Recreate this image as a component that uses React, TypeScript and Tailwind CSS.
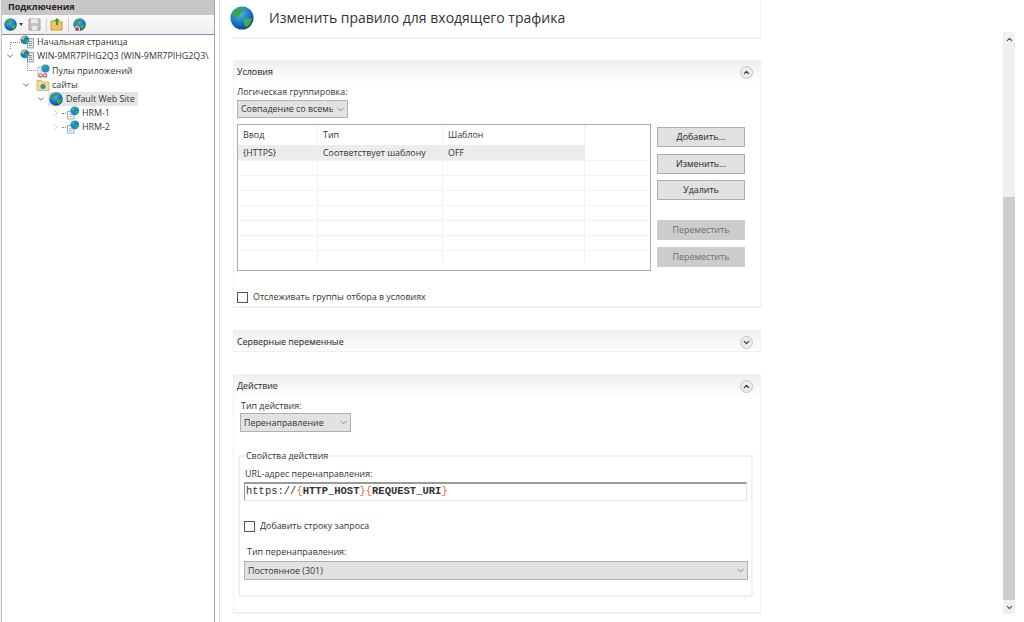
import React from 'react';
import { ChevronDown, ChevronRight, ChevronUp } from 'lucide-react';

const Land = ({ a = '#35a83a', b = '#3db045' }: { a?: string; b?: string }) => (
  <>
    <path d="M6 4c3-2 6-2 8-1 1 2-1 3-3 4-1 2-3 3-2 5-2 0-5-1-6-3 0-2 1-4 3-5z" fill={a} />
    <path d="M14 13c3-1 6-1 8 0-1 4-3 7-6 8-2-2-3-5-2-8z" fill={b} />
  </>
);

const Globe = ({ size = 13, id }: { size?: number; id: string }) => (
  <svg width={size} height={size} viewBox="0 0 24 24" className="shrink-0">
    <defs>
      <radialGradient id={id} cx="40%" cy="30%" r="75%">
        <stop offset="0%" stopColor="#5cb8ee" />
        <stop offset="60%" stopColor="#1673c4" />
        <stop offset="100%" stopColor="#0b3f85" />
      </radialGradient>
    </defs>
    <circle cx="12" cy="12" r="11.5" fill={`url(#${id})`} />
    <Land />
  </svg>
);

const ServerIcon = () => (
  <svg width="15" height="14" viewBox="0 0 30 28" className="shrink-0">
    <rect x="15" y="7" width="12" height="19" fill="#dfe5ea" stroke="#7c8a96" strokeWidth="1.5" />
    <path d="M18 13h6M18 17h6M18 21h6" stroke="#6d7b87" strokeWidth="1.5" />
    <g transform="translate(0 0) scale(0.8)">
      <circle cx="12" cy="12" r="11" fill="#1b7ccc" />
      <Land a="#e6c53a" />
    </g>
  </svg>
);

const AppIcon = () => (
  <svg width="14" height="14" viewBox="0 0 28 28" className="shrink-0">
    <rect x="4" y="6" width="16" height="19" fill="#f3f3f3" stroke="#9aa3ab" strokeWidth="1.5" />
    <path d="M7 12h10M7 16h10" stroke="#b9c0c6" strokeWidth="1.5" />
    <circle cx="19" cy="9" r="8" fill="#2b8ad6" />
    <path d="M15 5c2-2 6-3 8-1 0 3-4 3-5 6-2 0-3-3-3-5z" fill="#43ad48" />
    <circle cx="9" cy="23" r="3.5" fill="none" stroke="#d8453a" strokeWidth="2" />
    <circle cx="18" cy="23" r="3.5" fill="none" stroke="#d8453a" strokeWidth="2" />
  </svg>
);

const SitesIcon = () => (
  <svg width="14" height="14" viewBox="0 0 28 28" className="shrink-0">
    <path d="M2 5h9l2 3h13v17H2z" fill="#f2d98c" stroke="#c9a94e" strokeWidth="1.5" />
    <circle cx="14" cy="17" r="5" fill="#2384c9" />
    <path d="M11 15c2-2 4-2 6-1-1 2-3 3-4 5-1-1-2-2-2-4z" fill="#3db045" />
  </svg>
);

const AppGlobe = () => (
  <svg width="14" height="14" viewBox="0 0 28 28" className="shrink-0">
    <rect x="3" y="11" width="13" height="15" fill="#f4f6f8" stroke="#8b98a3" strokeWidth="1.5" />
    <path d="M6 17h7M6 21h7" stroke="#9fb0bc" strokeWidth="1.5" />
    <g transform="translate(8 0) scale(0.8)">
      <circle cx="12" cy="12" r="11" fill="#1b86cf" />
      <Land a="#35b0a0" />
    </g>
  </svg>
);

const TreeRow = ({
  indent,
  caret,
  icon,
  label,
  selected,
}: {
  indent: string;
  caret?: 'down' | 'right';
  icon: React.ReactNode;
  label: string;
  selected?: boolean;
}) => (
  <div className={`flex items-center h-[14px] whitespace-nowrap ${indent}`}>
    <span className="w-[12px] mr-[4px] shrink-0 flex items-center justify-center">
      {caret === 'down' && <ChevronDown size={10} strokeWidth={2} className="text-[#555]" />}
      {caret === 'right' && <ChevronRight size={10} strokeWidth={1.5} className="text-[#aaa]" />}
    </span>
    <span className={`flex items-center h-[14px] ${selected ? 'bg-[#e5e5e5] -ml-[3px] pl-[1px] pr-[3px]' : ''}`}>
      {icon}
      <span className={`${selected ? 'ml-[3px]' : 'ml-[2px]'} text-[#333]`}>{label}</span>
    </span>
  </div>
);

const Sidebar = () => (
  <aside className="w-[220px] shrink-0 h-full flex bg-white border-r border-[#dcdcdc]">
    <div className="w-[2px] bg-[#f0f0f0] border-r border-[#c4c4c4]" />
    <div className="w-[213px] overflow-hidden border-r border-[#a6a6a6] text-[8.9px] leading-[14px]">
      <div className="h-[15px] bg-[#c8c6c6] pl-[6px] text-[9px] font-bold text-[#222] leading-[14px]">Подключения</div>
      <div className="h-[20px] bg-gradient-to-b from-[#fafafa] to-[#efefef] border-b border-[#8a8ab5] flex items-center pl-[2px]">
        <Globe size={13} id="tb1" />
        <svg width="4" height="3" viewBox="0 0 4 3" className="ml-[2px]"><path d="M0 0h4L2 3z" fill="#444" /></svg>
        <svg width="13" height="13" viewBox="0 0 13 13" className="ml-[5px]">
          <path d="M1 1h11v11H1z" fill="#c4c4c4" stroke="#9e9e9e" />
          <path d="M3 1h7v4H3zM4 8h5v4H4z" fill="#e8e8e8" />
        </svg>
        <span className="w-px h-[14px] bg-[#cfcfcf] ml-[5px]" />
        <svg width="13" height="13" viewBox="0 0 13 13" className="ml-[3px]">
          <path d="M1 3h4l1 1h6v8H1z" fill="#edc65e" stroke="#c49b35" />
          <path d="M7 0l3 3H8v4H6V3H4z" fill="#2f9b3b" />
        </svg>
        <span className="w-px h-[14px] bg-[#cfcfcf] ml-[5px]" />
        <span className="relative flex ml-[4px]">
          <Globe size={13} id="tb2" />
          <span className="absolute left-[1px] bottom-[-1px] w-[6px] h-[6px] rounded-full bg-[#d9342b] border border-white" />
        </span>
      </div>
      <div className="relative">
        <span className="absolute left-[8px] top-[7px] w-[10px] h-[7px] border-l border-t border-dotted border-[#888]" />
        <TreeRow indent="pl-[2px]" icon={<ServerIcon />} label="Начальная страница" />
      </div>
      <TreeRow indent="pl-[2px]" caret="down" icon={<ServerIcon />} label="WIN-9MR7PIHG2Q3 (WIN-9MR7PIHG2Q3\" />
      <div className="relative mt-[1px]">
        <span className="absolute left-[25px] top-[-7px] h-[14px] w-[9px] border-l border-b border-dotted border-[#888]" />
        <TreeRow indent="pl-[18px]" icon={<AppIcon />} label="Пулы приложений" />
      </div>
      <TreeRow indent="pl-[18px]" caret="down" icon={<SitesIcon />} label="сайты" />
      <TreeRow indent="pl-[33px]" caret="down" icon={<Globe size={14} id="dws" />} label="Default Web Site" selected />
      <div className="relative">
        <span className="absolute left-[60px] top-[7px] w-[4px] border-t border-dotted border-[#888]" />
        <TreeRow indent="pl-[48px]" caret="right" icon={<AppGlobe />} label="HRM-1" />
      </div>
      <div className="relative">
        <span className="absolute left-[60px] top-[7px] w-[4px] border-t border-dotted border-[#888]" />
        <TreeRow indent="pl-[48px]" caret="right" icon={<AppGlobe />} label="HRM-2" />
      </div>
    </div>
  </aside>
);

const RoundToggle = ({ up }: { up?: boolean }) => (
  <span className="w-[13px] h-[13px] rounded-full bg-[#ececec] border border-[#c4c4c4] flex items-center justify-center">
    {up ? (
      <ChevronUp size={9} strokeWidth={3} className="text-[#333]" />
    ) : (
      <ChevronDown size={9} strokeWidth={3} className="text-[#333]" />
    )}
  </span>
);

const SectionHeader = ({ title, up }: { title: string; up?: boolean }) => (
  <div className="h-[22px] bg-gradient-to-b from-[#efefef] to-white flex items-center justify-between pl-[3px] pr-[7px]">
    <span className="text-[8.9px] text-[#333] [-webkit-text-stroke:0.1px_#333]">{title}</span>
    <RoundToggle up={up} />
  </div>
);

const FakeSelect = ({ label, className, clipAt }: { label: string; className: string; clipAt?: string }) => (
  <div className={`flex items-center justify-between bg-[#e2e2e2] border border-[#b0b0b0] pl-[3px] pr-[1px] text-[8.9px] text-[#333] whitespace-nowrap ${className}`}>
    <span className={`overflow-hidden ${clipAt ?? ''}`}>{label}</span>
    <ChevronDown size={11} strokeWidth={1.5} className="text-[#666] shrink-0" />
  </div>
);

const ActionBtn = ({ label, disabled, className }: { label: string; disabled?: boolean; className?: string }) => (
  <div
    className={`w-[88px] h-[20px] flex items-center justify-center text-[8.9px] border ${
      disabled ? 'bg-[#cccccc] border-[#cccccc] text-[#6d6d6d]' : 'bg-[#e1e1e1] border-[#adadad] text-[#222]'
    } ${className ?? ''}`}
  >
    {label}
  </div>
);

const Checkbox = () => <span className="w-[11px] h-[11px] bg-white border border-[#555] shrink-0" />;

const emptyRows = [0, 1, 2, 3, 4, 5, 6];

const ConditionsTable = () => (
  <div className="w-[414px] h-[147px] border border-[#a8aab4] overflow-hidden text-[8.9px] text-[#333] bg-white">
    <div className="flex h-[20px] items-center">
      <div className="w-[80px] pl-[5px] h-full flex items-center border-r border-[#f0f0f0]">Ввод</div>
      <div className="w-[125px] pl-[5px] h-full flex items-center border-r border-[#f0f0f0]">Тип</div>
      <div className="w-[142px] pl-[5px] h-full flex items-center border-r border-[#f0f0f0]">Шаблон</div>
    </div>
    <div className="flex h-[15px] items-center">
      <div className="w-[347px] h-full flex items-center bg-[#ececec]">
        <div className="w-[80px] pl-[5px]">{'{HTTPS}'}</div>
        <div className="w-[125px] pl-[5px] whitespace-nowrap">Соответствует шаблону</div>
        <div className="pl-[5px]">OFF</div>
      </div>
    </div>
    {emptyRows.map((r) => (
      <div key={r} className="flex h-[15px] border-t border-[#f3f3f3]">
        <div className="w-[80px] border-r border-[#f3f3f3]" />
        <div className="w-[125px] border-r border-[#f3f3f3]" />
        <div className="w-[142px] border-r border-[#f3f3f3]" />
      </div>
    ))}
  </div>
);

const UrlValue = () => (
  <div className="mt-[2px] h-[19px] w-[503px] border-t-2 border-l border-r border-b border-t-[#9a9a9a] border-l-[#9a9a9a] border-r-[#e4e4e4] border-b-[#e4e4e4] pl-[1px] font-['Liberation_Mono',monospace] text-[10.5px] leading-[15px] text-[#333] whitespace-nowrap">
    https://<span className="text-[#e0703c]">{'{'}</span>
    <b>HTTP_HOST</b>
    <span className="text-[#e0703c]">{'}{'}</span>
    <b>REQUEST_URI</b>
    <span className="text-[#e0703c]">{'}'}</span>
  </div>
);

const Content = () => (
  <main className="flex-1 min-w-0 h-full bg-white text-[8.9px] leading-[12px] text-[#333] pl-[13px]">
    <div className="w-[528px] h-[39px] border-b-2 border-[#f1f1f1] border-r border-r-[#f1f1f1] relative flex">
      <div className="absolute left-[-3px] top-[6px]"><Globe size={24} id="title" /></div>
      <h1 className="ml-[36px] mt-[8px] text-[14px] leading-[20px] font-normal text-[#333]">Изменить правило для входящего трафика</h1>
    </div>

    <section className="mt-[21px] w-[528px] h-[248px] border border-[#f0f0f0] border-b-2">
      <SectionHeader title="Условия" up />
      <div className="pl-[3px] pt-[2px]">
        <div className="h-[13px] leading-[13px]">Логическая группировка:</div>
        <FakeSelect label="Совпадение со всемь" clipAt="w-[92px]" className="w-[111px] h-[18px] mt-[2px]" />
        <div className="flex mt-[6px]">
          <ConditionsTable />
          <div className="ml-[6px] pt-[3px] flex flex-col">
            <ActionBtn label="Добавить..." />
            <ActionBtn label="Изменить..." className="mt-[7px]" />
            <ActionBtn label="Удалить" className="mt-[6px]" />
            <ActionBtn label="Переместить" disabled className="mt-[20px]" />
            <ActionBtn label="Переместить" disabled className="mt-[7px]" />
          </div>
        </div>
        <div className="flex items-center mt-[20px] gap-[5px]">
          <Checkbox />
          <span>Отслеживать группы отбора в условиях</span>
        </div>
      </div>
    </section>

    <section className="mt-[22px] w-[528px] h-[22px] border border-[#f0f0f0] overflow-hidden">
      <SectionHeader title="Серверные переменные" />
    </section>

    <section className="mt-[22px] w-[528px] h-[240px] border border-[#f0f0f0] border-b-2">
      <SectionHeader title="Действие" up />
      <div className="pl-[6px] pt-[2px]">
        <div className="h-[13px] leading-[13px] pl-[1px]">Тип действия:</div>
        <FakeSelect label="Перенаправление" className="w-[111px] h-[19px] mt-[1px]" />
      </div>
      <fieldset className="mt-[19px] ml-[4px] w-[515px] h-[146px] border-2 border-[#f1f1f1] pl-[4px]">
        <legend className="ml-[1px] px-[1px] text-[8.9px] leading-[10px]">Свойства действия</legend>
        <div className="mt-[6px] h-[13px] leading-[13px] pl-[1px]">URL-адрес перенаправления:</div>
        <UrlValue />
        <div className="flex items-center mt-[19px] gap-[5px]">
          <Checkbox />
          <span>Добавить строку запроса</span>
        </div>
        <div className="mt-[13px] h-[13px] leading-[13px] pl-[3px]">Тип перенаправления:</div>
        <FakeSelect label="Постоянное (301)" className="w-[504px] h-[19px] mt-[3px]" />
      </fieldset>
    </section>
  </main>
);

const Scrollbar = () => (
  <div className="w-[12px] shrink-0 mr-[9px] mt-[32px] h-[582px] flex flex-col bg-[#f0f0f0]">
    <div className="h-[14px] flex items-center justify-center">
      <ChevronUp size={9} strokeWidth={3} className="text-[#555]" />
    </div>
    <div className="flex-1 flex flex-col justify-end">
      <div className="h-[403px] bg-[#cdcdcd]" />
    </div>
    <div className="h-[14px] flex items-center justify-center">
      <ChevronDown size={9} strokeWidth={3} className="text-[#555]" />
    </div>
  </div>
);

export default function App() {
  return (
    <div className="w-[1024px] h-[622px] overflow-hidden flex bg-white font-['Open_Sans','Noto_Sans',sans-serif]">
      <Sidebar />
      <Content />
      <Scrollbar />
    </div>
  );
}
